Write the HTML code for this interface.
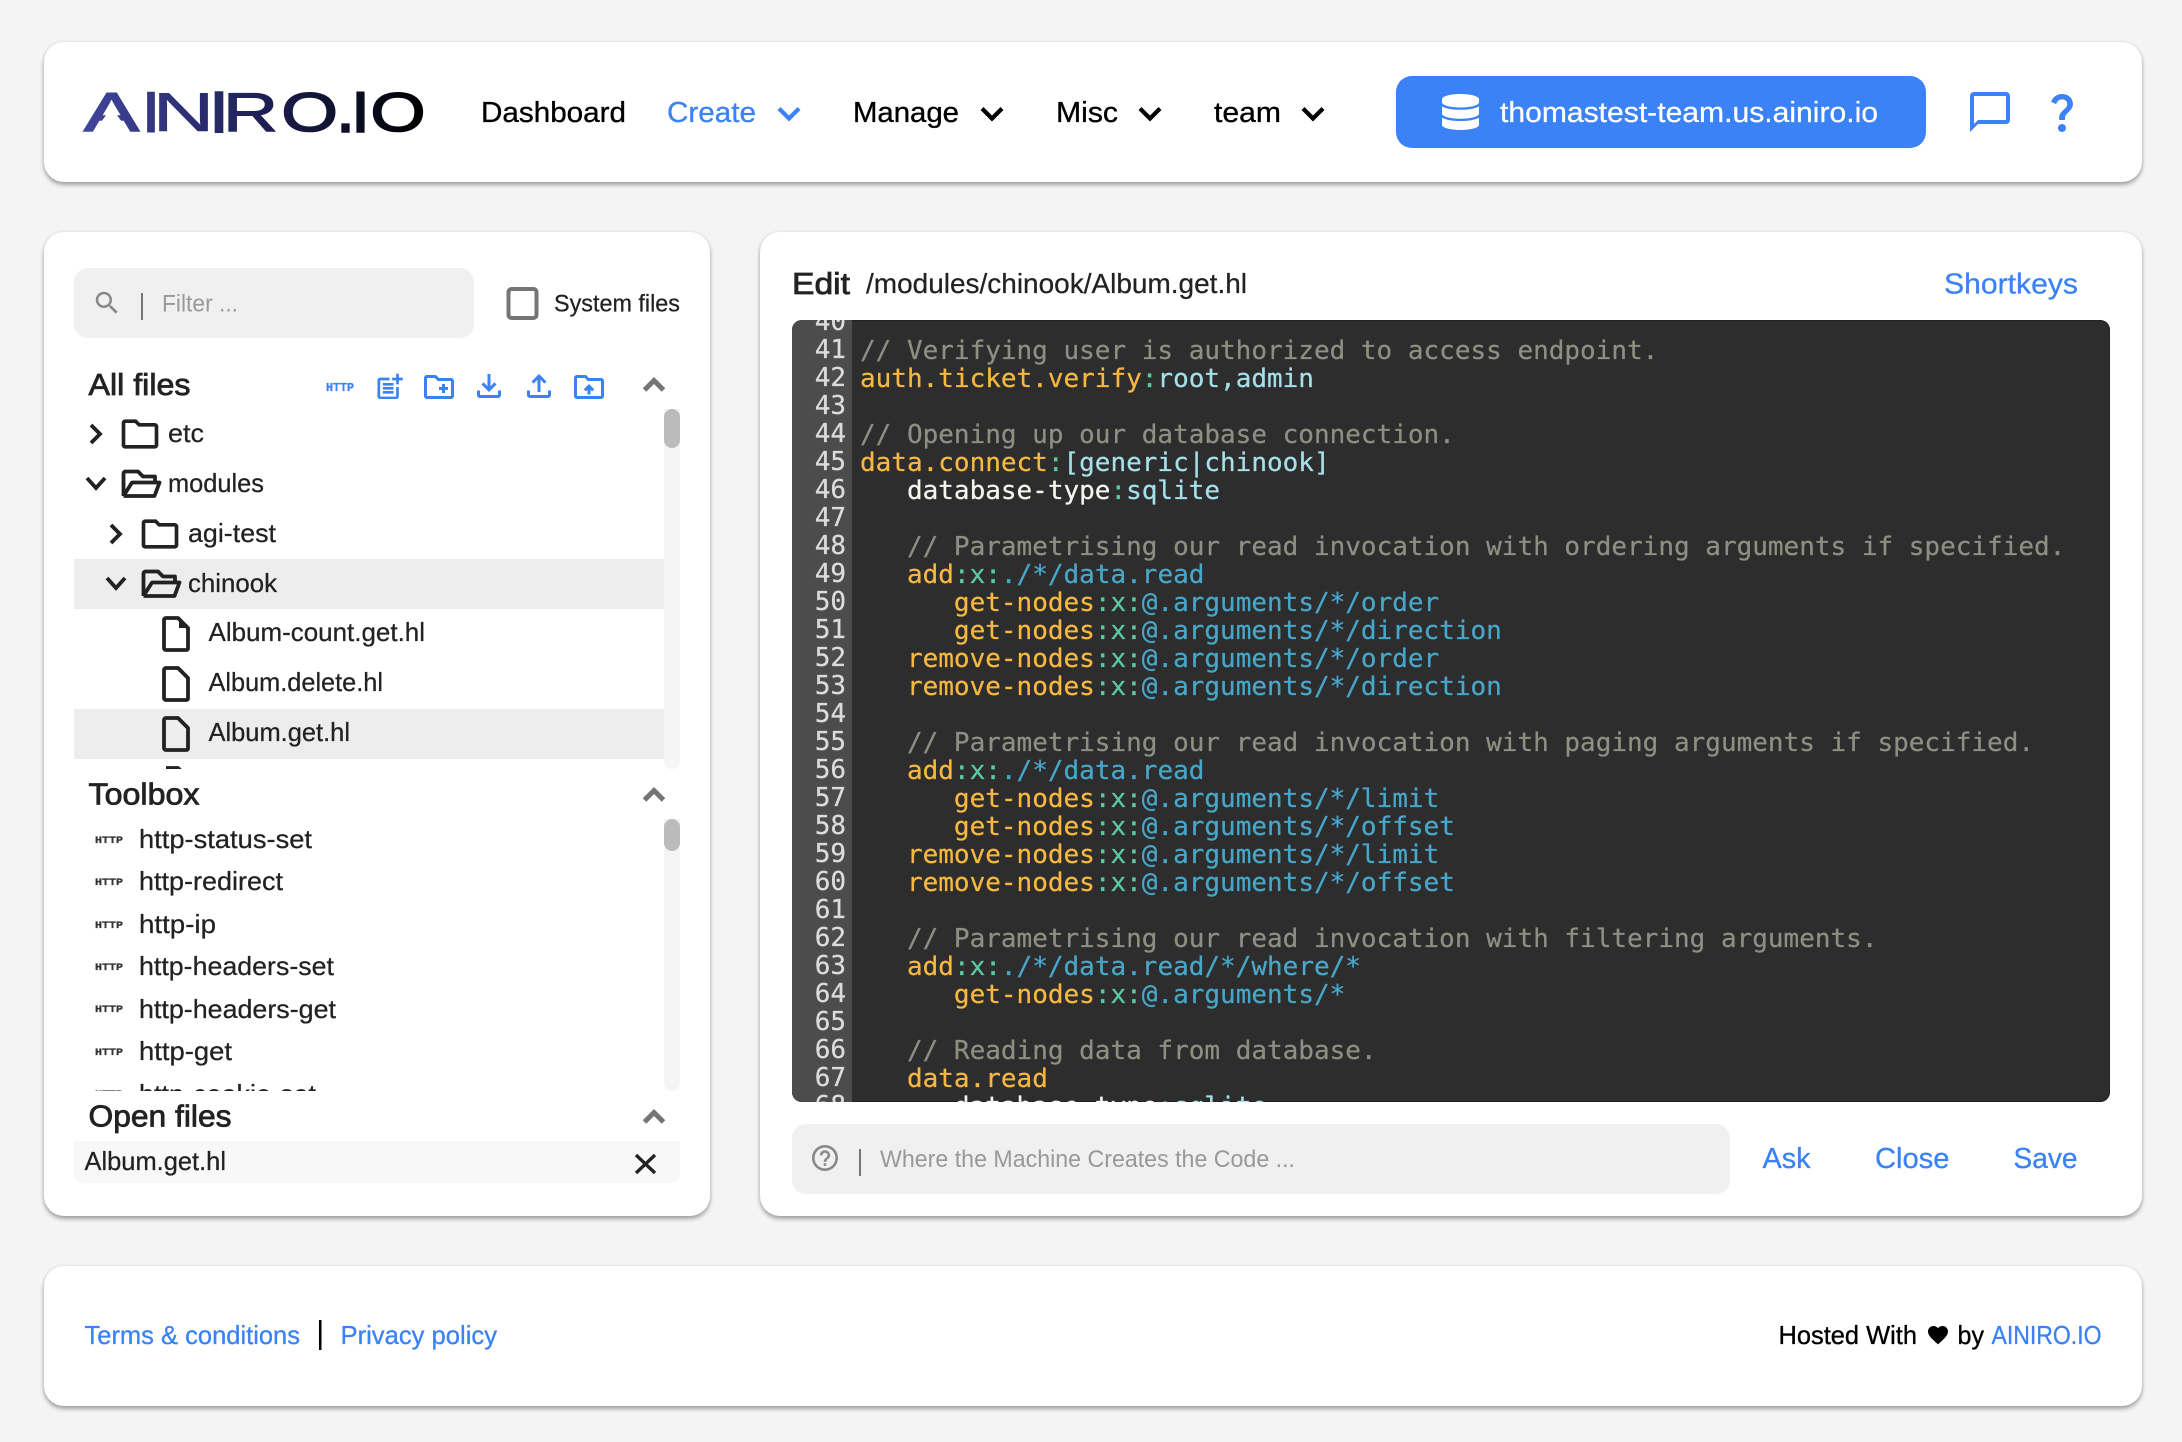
<!DOCTYPE html>
<html lang="en">
<head>
<meta charset="utf-8">
<title>AINIRO Hyper IDE</title>
<style>
html,body{margin:0;padding:0;width:2182px;height:1442px;overflow:hidden;background:#f4f4f4;font-family:"Liberation Sans",sans-serif}
.card{position:absolute;background:#fff;border-radius:20px;box-shadow:0 3px 4px rgba(0,0,0,.32),0 0 4px rgba(0,0,0,.08)}
.box{position:absolute;background:#f0f0f0;border-radius:14px}
.row{position:absolute;left:74px;width:590px;height:50px;background:#ededed}
.track{position:absolute;left:664px;width:16px;background:#f5f5f5;border-radius:0 0 8px 8px}
.thumb{position:absolute;left:0;top:0;width:16px;background:#bbb;border-radius:8px}
.editor{position:absolute;left:792px;top:320px;width:1318px;height:782px;background:#2d2d2d;border-radius:10px;overflow:hidden;box-shadow:inset 0 0 0 1px #222}
.gutter{position:absolute;left:0;top:0;width:60px;height:782px;background:#4c4c4c}
pre{position:absolute;margin:0;font-family:"DejaVu Sans Mono","Liberation Mono",monospace;font-size:26px;line-height:28px;-webkit-text-stroke:.25px}
.nums{left:0;top:-12px;width:54px;text-align:right;color:#dcdcdc}
.code{left:68px;top:-11px;color:#f6f6ee}
.c{color:#8e8e82}.k{color:#f8b840}.p{color:#5ac8a6}.v{color:#a5dfea}.b{color:#47a6c9}
svg.layer{position:absolute;left:0;top:0}
svg text{font-family:"Liberation Sans",sans-serif}
.blk{fill:#000;stroke:#000;stroke-width:.35px}.dk{fill:#222}.blu{fill:#3b82f6;stroke:#3b82f6;stroke-width:.3px}.gry{fill:#999}
.ttl{font-size:31px;fill:#222;stroke:#222;stroke-width:.8px}
.tree{font-size:26px;fill:#222;stroke:#222;stroke-width:.25px}
.ic{fill:#3b82f6}
.ln{fill:none;stroke:#222;stroke-width:3.8}
.up{fill:none;stroke:#757575;stroke-width:5}
.nv{fill:none;stroke-width:4.2}
.mono{font-family:"Liberation Mono",monospace!important;font-weight:700;stroke-width:.3px}
</style>
</head>
<body>
<div class="card" style="left:44px;top:42px;width:2098px;height:140px"></div>
<div class="card" style="left:44px;top:232px;width:666px;height:984px"></div>
<div class="card" style="left:760px;top:232px;width:1382px;height:984px"></div>
<div class="card" style="left:44px;top:1266px;width:2098px;height:140px"></div>

<div style="position:absolute;left:1396px;top:76px;width:530px;height:72px;background:#3b82f6;border-radius:16px"></div>

<div class="box" style="left:74px;top:268px;width:400px;height:70px"></div>
<div class="row" style="top:559px"></div>
<div class="row" style="top:709px"></div>
<div class="track" style="top:409px;height:360px"><div class="thumb" style="height:39px"></div></div>
<div class="track" style="top:819px;height:272px"><div class="thumb" style="height:32px"></div></div>
<div style="position:absolute;left:74px;top:1141px;width:606px;height:42px;background:#f8f8f8;border-radius:0 0 8px 8px"></div>
<div class="box" style="left:792px;top:1124px;width:938px;height:70px"></div>

<div class="editor">
<div class="gutter"></div>
<pre class="nums">40
41
42
43
44
45
46
47
48
49
50
51
52
53
54
55
56
57
58
59
60
61
62
63
64
65
66
67
68</pre>
<pre class="code"> 
<span class="c">// Verifying user is authorized to access endpoint.</span>
<span class="k">auth.ticket.verify</span><span class="p">:</span><span class="v">root,admin</span>

<span class="c">// Opening up our database connection.</span>
<span class="k">data.connect</span><span class="p">:</span><span class="v">[generic|chinook]</span>
   database-type<span class="p">:</span><span class="v">sqlite</span>

   <span class="c">// Parametrising our read invocation with ordering arguments if specified.</span>
   <span class="k">add</span><span class="p">:x:</span><span class="b">./*/data.read</span>
      <span class="k">get-nodes</span><span class="p">:x:</span><span class="b">@.arguments/*/order</span>
      <span class="k">get-nodes</span><span class="p">:x:</span><span class="b">@.arguments/*/direction</span>
   <span class="k">remove-nodes</span><span class="p">:x:</span><span class="b">@.arguments/*/order</span>
   <span class="k">remove-nodes</span><span class="p">:x:</span><span class="b">@.arguments/*/direction</span>

   <span class="c">// Parametrising our read invocation with paging arguments if specified.</span>
   <span class="k">add</span><span class="p">:x:</span><span class="b">./*/data.read</span>
      <span class="k">get-nodes</span><span class="p">:x:</span><span class="b">@.arguments/*/limit</span>
      <span class="k">get-nodes</span><span class="p">:x:</span><span class="b">@.arguments/*/offset</span>
   <span class="k">remove-nodes</span><span class="p">:x:</span><span class="b">@.arguments/*/limit</span>
   <span class="k">remove-nodes</span><span class="p">:x:</span><span class="b">@.arguments/*/offset</span>

   <span class="c">// Parametrising our read invocation with filtering arguments.</span>
   <span class="k">add</span><span class="p">:x:</span><span class="b">./*/data.read/*/where/*</span>
      <span class="k">get-nodes</span><span class="p">:x:</span><span class="b">@.arguments/*</span>

   <span class="c">// Reading data from database.</span>
   <span class="k">data.read</span>
      database-type<span class="p">:</span><span class="v">sqlite</span></pre>
</div>

<svg class="layer" width="2182" height="1442" viewBox="0 0 2182 1442" xmlns="http://www.w3.org/2000/svg">
<defs>
<linearGradient id="lg" gradientUnits="userSpaceOnUse" x1="84" y1="0" x2="422" y2="0"><stop offset="0" stop-color="#41459c"/><stop offset=".5" stop-color="#1f2258"/><stop offset="1" stop-color="#000"/></linearGradient>
<clipPath id="clipTree"><rect x="74" y="409" width="590" height="360"/></clipPath>
<clipPath id="clipTool"><rect x="74" y="819" width="590" height="272"/></clipPath>
</defs>

<!-- Logo -->
<g fill="url(#lg)" stroke="url(#lg)" font-size="55">
<text x="84" y="131" textLength="55" lengthAdjust="spacingAndGlyphs" stroke-width="1.500">A</text>
<text x="143.800" y="131" textLength="14.500" lengthAdjust="spacingAndGlyphs" stroke-width="3">I</text>
<text x="152.500" y="131" textLength="62" lengthAdjust="spacingAndGlyphs" stroke-width=".5">N</text>
<text x="211.800" y="131" textLength="14.500" lengthAdjust="spacingAndGlyphs" stroke-width="4">I</text>
<text x="222.800" y="131" textLength="55.600" lengthAdjust="spacingAndGlyphs" stroke-width="1">R</text>
<text x="281.400" y="131" textLength="56.500" lengthAdjust="spacingAndGlyphs" stroke-width="1.600">O</text>
<text x="338.300" y="131" textLength="14.500" lengthAdjust="spacingAndGlyphs" stroke-width="3.500">.</text>
<text x="353.200" y="131" textLength="14.500" lengthAdjust="spacingAndGlyphs" stroke-width="3.500">I</text>
<text x="370.500" y="131" textLength="55" lengthAdjust="spacingAndGlyphs" stroke-width="1.600">O</text>
</g>
<polygon points="106.500,114.500 116.500,114.500 122.800,123 100.200,123" fill="#fff"/>

<!-- Nav -->
<g font-size="29">
<text class="blk" x="481" y="122" textLength="145" lengthAdjust="spacingAndGlyphs">Dashboard</text>
<text class="blu" x="667" y="122" textLength="89" lengthAdjust="spacingAndGlyphs">Create</text>
<text class="blk" x="853" y="122" textLength="106" lengthAdjust="spacingAndGlyphs">Manage</text>
<text class="blk" x="1056" y="122" textLength="62" lengthAdjust="spacingAndGlyphs">Misc</text>
<text class="blk" x="1214" y="122" textLength="67" lengthAdjust="spacingAndGlyphs">team</text>
<text fill="#fff" stroke="#fff" stroke-width=".25" x="1500" y="122" textLength="378" lengthAdjust="spacingAndGlyphs">thomastest-team.us.ainiro.io</text>
</g>
<polyline class="nv" stroke="#3b82f6" points="779,108.500 789,118.500 799,108.500"/>
<polyline class="nv" stroke="#000" points="982,108.500 992,118.500 1002,108.500"/>
<polyline class="nv" stroke="#000" points="1140,108.500 1150,118.500 1160,108.500"/>
<polyline class="nv" stroke="#000" points="1303,108.500 1313,118.500 1323,108.500"/>

<svg x="1442" y="94" width="37" height="36" viewBox="0 0 448 512" preserveAspectRatio="none"><path fill="#fff" d="M448 73.143v45.714C448 159.143 347.667 192 224 192S0 159.143 0 118.857V73.143C0 32.857 100.333 0 224 0s224 32.857 224 73.143zM448 176v102.857C448 319.143 347.667 352 224 352S0 319.143 0 278.857V176c48.125 33.143 136.208 48.572 224 48.572S399.874 209.143 448 176zm0 160v102.857C448 479.143 347.667 512 224 512S0 479.143 0 438.857V336c48.125 33.143 136.208 48.572 224 48.572S399.874 369.143 448 336z"/></svg>
<svg x="1966" y="88" width="48" height="48" viewBox="0 0 24 24"><path class="ic" d="M20 2H4c-1.100 0-2 .9-2 2v18l4-4h14c1.100 0 2-.9 2-2V4c0-1.100-.9-2-2-2zm0 14H6l-2 2V4h16v12z"/></svg>
<svg x="2038" y="88" width="48" height="48" viewBox="0 0 24 24"><path class="ic" d="M11.070 12.850c.77-1.390 2.250-2.210 3.110-3.440.91-1.290.4-3.700-2.180-3.700-1.690 0-2.520 1.280-2.870 2.340L6.540 6.960C7.250 4.830 9.180 3 11.990 3c2.350 0 3.960 1.070 4.780 2.410.7 1.150 1.110 3.300.03 4.900-1.200 1.770-2.350 2.310-2.970 3.450-.25.46-.35.76-.35 2.240h-2.890c-.01-.78-.13-2.050.48-3.150zM14 20c0 1.100-.9 2-2 2s-2-.9-2-2 .9-2 2-2 2 .9 2 2z"/></svg>

<!-- Filter row -->
<svg x="92" y="288" width="30" height="30" viewBox="0 0 24 24"><path fill="#888" d="M15.500 14h-.79l-.28-.27C15.410 12.590 16 11.110 16 9.500 16 5.910 13.090 3 9.500 3S3 5.910 3 9.500 5.910 16 9.500 16c1.610 0 3.090-.59 4.230-1.570l.27.28v.79l5 4.990L20.490 19l-4.990-5zm-6 0C7.010 14 5 11.990 5 9.500S7.010 5 9.500 5 14 7.010 14 9.500 11.990 14 9.500 14z"/></svg>
<rect x="141" y="293" width="2" height="27" fill="#777"/>
<text class="gry" font-size="24" x="162" y="311.500" textLength="76" lengthAdjust="spacingAndGlyphs">Filter ...</text>
<rect x="508.500" y="289" width="28" height="29" rx="3" fill="none" stroke="#757575" stroke-width="4"/>
<text class="dk" stroke="#222" stroke-width=".25" font-size="24" x="554" y="311.500" textLength="126" lengthAdjust="spacingAndGlyphs">System files</text>

<!-- All files header -->
<text class="ttl" x="88.500" y="395" textLength="102" lengthAdjust="spacingAndGlyphs">All files</text>
<text class="mono" fill="#3b82f6" stroke="#3b82f6" font-size="11.500" x="326" y="391" textLength="28" lengthAdjust="spacingAndGlyphs">HTTP</text>
<svg x="373.500" y="371" width="32" height="32" viewBox="0 0 24 24"><path class="ic" d="M17 19.220H5V7h7V5H5c-1.100 0-2 .9-2 2v12c0 1.100.9 2 2 2h12c1.100 0 2-.9 2-2v-7h-2v7.220zM19 2h-2v3h-3c.01.01 0 2 0 2h3v2.990c.01.01 2 0 2 0V7h3V5h-3V2zM7 9h8v2H7zM7 12v2h8v-2h-3zM7 15h8v2H7z"/></svg>
<svg x="421" y="369" width="36" height="36" viewBox="0 0 24 24"><path class="ic" d="M20 6h-8l-2-2H4c-1.110 0-1.990.89-1.990 2L2 18c0 1.110.89 2 2 2h16c1.110 0 2-.89 2-2V8c0-1.110-.89-2-2-2zm0 12H4V6h5.170l2 2H20v10zm-8-4h2v2h2v-2h2v-2h-2v-2h-2v2h-2z"/></svg>
<svg x="471" y="368" width="36" height="36" viewBox="0 0 24 24"><path class="ic" d="M18 15v3H6v-3H4v3c0 1.100.9 2 2 2h12c1.100 0 2-.9 2-2v-3h-2zm-1-4l-1.410-1.410L13 12.170V4h-2v8.170L8.410 9.590 7 11l5 5 5-5z"/></svg>
<svg x="521" y="368" width="36" height="36" viewBox="0 0 24 24"><path class="ic" d="M18 15v3H6v-3H4v3c0 1.100.9 2 2 2h12c1.100 0 2-.9 2-2v-3h-2zM7 9l1.410 1.410L11 7.830V16h2V7.830l2.590 2.580L17 9l-5-5-5 5z"/></svg>
<svg x="571" y="369" width="36" height="36" viewBox="0 0 24 24"><path class="ic" d="M20 6h-8l-2-2H4c-1.110 0-1.990.89-1.990 2L2 18c0 1.110.89 2 2 2h16c1.110 0 2-.89 2-2V8c0-1.110-.89-2-2-2zm0 12H4V6h5.170l2 2H20v10z"/><path class="ic" d="M8.500 13.500l1.410 1.410L11 13.840V17h2v-3.160l1.090 1.070L15.500 13.500 12 10z"/></svg>
<polyline class="up" points="644.500,390 654,380.500 663.500,390"/>

<!-- Tree -->
<g clip-path="url(#clipTree)">
<polyline class="ln" points="91,425 100,434 91,443"/>
<svg x="118" y="412" width="44" height="44" viewBox="0 0 24 24"><path class="dk" d="M20 6h-8l-2-2H4c-1.110 0-1.990.89-1.990 2L2 18c0 1.110.89 2 2 2h16c1.110 0 2-.89 2-2V8c0-1.110-.89-2-2-2zm0 12H4V6h5.170l2 2H20v10z"/></svg>
<text class="tree" x="168" y="442" textLength="36" lengthAdjust="spacingAndGlyphs">etc</text>

<polyline class="ln" points="87,478 96,488 105,478"/>
<path class="ln" stroke-linejoin="round" d="M123.500 496V473.500a2 2 0 0 1 2-2H138l5 5h12v5M123.500 496h31l5-13.500H132L123.500 496"/>
<text class="tree" x="168" y="492" textLength="96" lengthAdjust="spacingAndGlyphs">modules</text>

<polyline class="ln" points="111,525 120,534 111,543"/>
<svg x="138" y="512" width="44" height="44" viewBox="0 0 24 24"><path class="dk" d="M20 6h-8l-2-2H4c-1.110 0-1.990.89-1.990 2L2 18c0 1.110.89 2 2 2h16c1.110 0 2-.89 2-2V8c0-1.110-.89-2-2-2zm0 12H4V6h5.170l2 2H20v10z"/></svg>
<text class="tree" x="188" y="542" textLength="88" lengthAdjust="spacingAndGlyphs">agi-test</text>

<polyline class="ln" points="107,578 116,588 125,578"/>
<path class="ln" stroke-linejoin="round" d="M143.500 596V573.500a2 2 0 0 1 2-2H158l5 5h12v5M143.500 596h31l5-13.500H152L143.500 596"/>
<text class="tree" x="188" y="592" textLength="89" lengthAdjust="spacingAndGlyphs">chinook</text>

<path class="ln" stroke-linejoin="round" d="M166 618h12l10 10v20.500a1.500 1.500 0 0 1-1.500 1.500h-20.500a2 2 0 0 1-2-2V620a2 2 0 0 1 2-2z"/>
<polygon class="dk" points="179,618 189,628 179,628"/>
<text class="tree" x="208.500" y="641" textLength="216.500" lengthAdjust="spacingAndGlyphs">Album-count.get.hl</text>

<path class="ln" stroke-linejoin="round" d="M166 668h12l10 10v20.500a1.500 1.500 0 0 1-1.500 1.500h-20.500a2 2 0 0 1-2-2V670a2 2 0 0 1 2-2z"/>
<text class="tree" x="208.500" y="691" textLength="174.500" lengthAdjust="spacingAndGlyphs">Album.delete.hl</text>

<path class="ln" stroke-linejoin="round" d="M166 718h12l10 10v20.500a1.500 1.500 0 0 1-1.500 1.500h-20.500a2 2 0 0 1-2-2V720a2 2 0 0 1 2-2z"/>
<text class="tree" x="208.500" y="741" textLength="141.500" lengthAdjust="spacingAndGlyphs">Album.get.hl</text>

<path class="ln" stroke-linejoin="round" d="M166 768h12l10 10v20"/>
</g>

<!-- Toolbox -->
<text class="ttl" x="88.500" y="804.500" textLength="111" lengthAdjust="spacingAndGlyphs">Toolbox</text>
<polyline class="up" points="644.500,800 654,790.500 663.500,800"/>
<g clip-path="url(#clipTool)">
<g fill="#333" stroke="#333" font-size="10.500">
<text class="mono" x="95" y="843" textLength="28" lengthAdjust="spacingAndGlyphs">HTTP</text>
<text class="mono" x="95" y="885" textLength="28" lengthAdjust="spacingAndGlyphs">HTTP</text>
<text class="mono" x="95" y="928" textLength="28" lengthAdjust="spacingAndGlyphs">HTTP</text>
<text class="mono" x="95" y="970" textLength="28" lengthAdjust="spacingAndGlyphs">HTTP</text>
<text class="mono" x="95" y="1012" textLength="28" lengthAdjust="spacingAndGlyphs">HTTP</text>
<text class="mono" x="95" y="1055" textLength="28" lengthAdjust="spacingAndGlyphs">HTTP</text>
<text class="mono" x="95" y="1097" textLength="28" lengthAdjust="spacingAndGlyphs">HTTP</text>
</g>
<text class="tree" x="139" y="848" textLength="173" lengthAdjust="spacingAndGlyphs">http-status-set</text>
<text class="tree" x="139" y="890" textLength="144" lengthAdjust="spacingAndGlyphs">http-redirect</text>
<text class="tree" x="139" y="933" textLength="77" lengthAdjust="spacingAndGlyphs">http-ip</text>
<text class="tree" x="139" y="975" textLength="195" lengthAdjust="spacingAndGlyphs">http-headers-set</text>
<text class="tree" x="139" y="1018" textLength="197" lengthAdjust="spacingAndGlyphs">http-headers-get</text>
<text class="tree" x="139" y="1060" textLength="93" lengthAdjust="spacingAndGlyphs">http-get</text>
<text class="tree" x="139" y="1103" textLength="177" lengthAdjust="spacingAndGlyphs">http-cookie-set</text>
</g>

<!-- Open files -->
<text class="ttl" x="88.500" y="1126.500" textLength="143" lengthAdjust="spacingAndGlyphs">Open files</text>
<polyline class="up" points="644.500,1122 654,1112.500 663.500,1122"/>
<text class="tree" x="84.500" y="1170" textLength="141.500" lengthAdjust="spacingAndGlyphs">Album.get.hl</text>
<path class="ln" style="stroke-width:3.300px" d="M636 1155L655 1173M655 1155L636 1173"/>

<!-- Editor header -->
<text class="ttl" x="792" y="294" textLength="58" lengthAdjust="spacingAndGlyphs">Edit</text>
<text class="dk" stroke="#222" stroke-width=".25" font-size="27.500" x="866" y="293" textLength="381" lengthAdjust="spacingAndGlyphs">/modules/chinook/Album.get.hl</text>
<text class="blu" font-size="29" x="1944" y="293.500" textLength="134" lengthAdjust="spacingAndGlyphs">Shortkeys</text>

<!-- Ask row -->
<svg x="809.400" y="1142.400" width="31.200" height="31.200" viewBox="0 0 24 24"><path fill="#888" d="M11 18h2v-2h-2v2zm1-16C6.480 2 2 6.480 2 12s4.480 10 10 10 10-4.480 10-10S17.520 2 12 2zm0 18c-4.410 0-8-3.590-8-8s3.590-8 8-8 8 3.590 8 8-3.590 8-8 8zm0-14c-2.210 0-4 1.790-4 4h2c0-1.100.9-2 2-2s2 .9 2 2c0 2-3 1.750-3 5h2c0-2.250 3-2.500 3-5 0-2.210-1.790-4-4-4z"/></svg>
<rect x="859" y="1149" width="2" height="27" fill="#777"/>
<text class="gry" font-size="24" x="880" y="1167" textLength="415" lengthAdjust="spacingAndGlyphs">Where the Machine Creates the Code ...</text>
<g font-size="29">
<text class="blu" x="1762.500" y="1168" textLength="48" lengthAdjust="spacingAndGlyphs">Ask</text>
<text class="blu" x="1875" y="1168" textLength="74.500" lengthAdjust="spacingAndGlyphs">Close</text>
<text class="blu" x="2013.500" y="1168" textLength="64" lengthAdjust="spacingAndGlyphs">Save</text>
</g>

<!-- Footer -->
<g font-size="26">
<text class="blu" x="84.500" y="1344" textLength="215.500" lengthAdjust="spacingAndGlyphs">Terms &amp; conditions</text>
<text class="blu" x="340.500" y="1344" textLength="156.500" lengthAdjust="spacingAndGlyphs">Privacy policy</text>
<text class="blk" x="1778.500" y="1344" textLength="138.500" lengthAdjust="spacingAndGlyphs">Hosted With</text>
<text class="blk" x="1957.500" y="1344" textLength="26.500" lengthAdjust="spacingAndGlyphs">by</text>
<text class="blu" x="1991.500" y="1344" textLength="110" lengthAdjust="spacingAndGlyphs">AINIRO.IO</text>
</g>
<rect x="319" y="1320" width="2.500" height="30" fill="#000"/>
<svg x="1926" y="1323" width="24" height="24" viewBox="0 0 24 24"><path fill="#000" d="M12 21.350l-1.450-1.320C5.400 15.360 2 12.280 2 8.500 2 5.420 4.420 3 7.500 3c1.740 0 3.410.81 4.500 2.090C13.090 3.810 14.760 3 16.500 3 19.580 3 22 5.420 22 8.500c0 3.780-3.400 6.860-8.550 11.540L12 21.350z"/></svg>
</svg>
</body>
</html>
